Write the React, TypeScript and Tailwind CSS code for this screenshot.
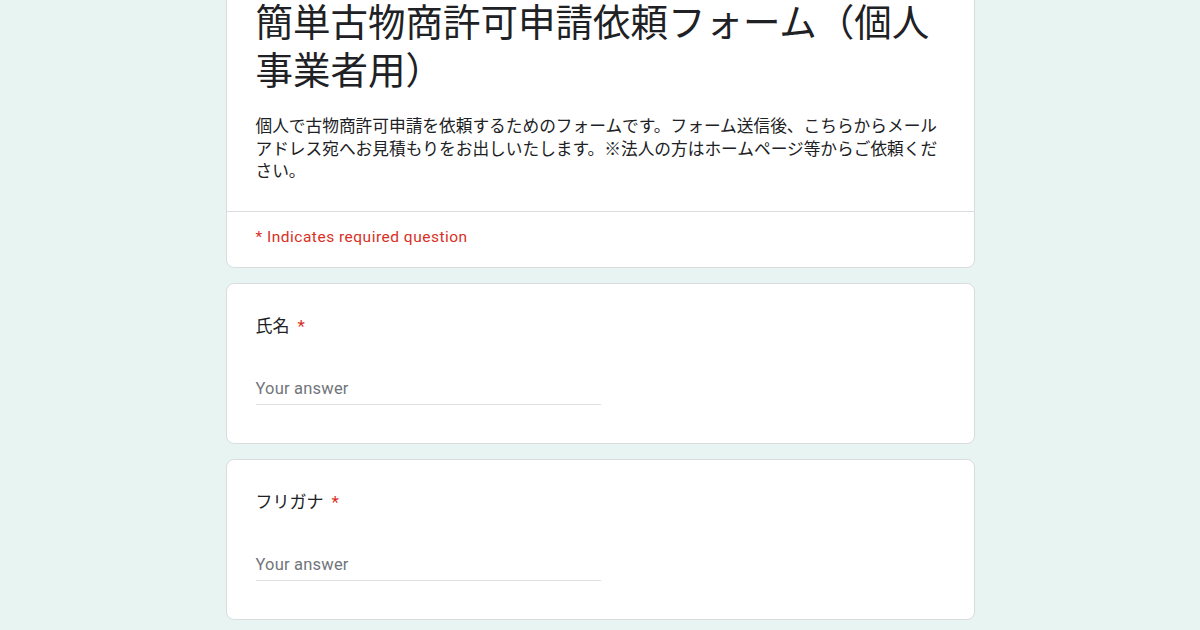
const font = { fontFamily: '"Roboto", "Noto Sans CJK JP", sans-serif' };

function QuestionCard({ label }: { label: string }) {
  return (
    <div className="rounded-[8px] border border-[#dadce0] bg-white px-[29px] pt-[30px] pb-[38px]">
      <div className="text-[17px] leading-[24px] text-[#202124]">
        {label}
        <span className="ml-[8px] text-[#d93025]">*</span>
      </div>
      <div className="mt-[34px] flex h-[33px] w-[345px] items-center border-b border-[#e0e0e0] pt-[3px]">
        <span className="text-[16.5px] tracking-[0.2px] text-[#70757a]">Your answer</span>
      </div>
    </div>
  );
}

export default function App() {
  return (
    <div className="h-[630px] w-full overflow-hidden bg-[#e7f4f1]" style={font}>
      <div className="mx-auto flex w-[749px] flex-col gap-[15px]">
        <div className="-mt-[24px] rounded-[8px] border border-[#dadce0] bg-white">
          <div className="px-[29px] pt-[22px] pb-[27px]">
            <h1 className="text-[37.5px] leading-[48px] text-[#202124]">
              簡単古物商許可申請依頼フォーム（個人事業者用）
            </h1>
            <p className="mt-[21px] text-[16.7px] leading-[22.5px] text-[#202124]">
              個人で古物商許可申請を依頼するためのフォームです。フォーム送信後、こちらからメールアドレス宛へお見積もりをお出しいたします。※法人の方はホームページ等からご依頼ください。
            </p>
          </div>
          <div className="border-t border-[#dadce0] px-[29px] pt-[15px] pb-[20px]">
            <div className="text-[15.5px] leading-[20px] tracking-[0.5px] text-[#d93025]">* Indicates required question</div>
          </div>
        </div>
        <QuestionCard label="氏名" />
        <QuestionCard label="フリガナ" />
      </div>
    </div>
  );
}
